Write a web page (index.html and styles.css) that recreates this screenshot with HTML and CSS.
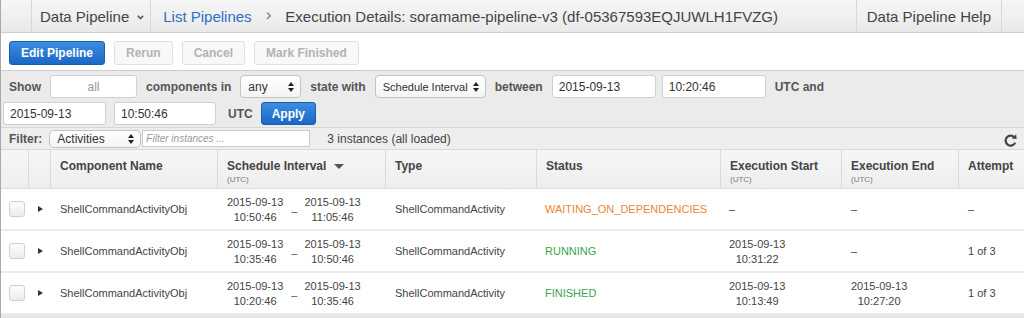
FILE: index.html
```html
<!DOCTYPE html>
<html>
<head>
<meta charset="utf-8">
<link rel="stylesheet" href="styles.css">
</head>
<body>
<div class="page">
  <header class="topbar">
    <div class="nav-cell nav-blank"></div>
    <div class="nav-cell nav-service">Data Pipeline
      <svg class="chev" width="7" height="5" viewBox="0 0 7 5"><polyline points="0.8,0.8 3.5,3.6 6.2,0.8" fill="none" stroke="#555" stroke-width="1.6"/></svg>
    </div>
    <nav class="crumbs">
      <a class="crumb-link">List Pipelines</a>
      <span class="crumb-sep">›</span>
      <span class="crumb-title">Execution Details: soramame-pipeline-v3 (df-05367593EQJUWLH1FVZG)</span>
    </nav>
    <div class="nav-cell nav-help">Data Pipeline Help</div>
    <div class="nav-tail"></div>
  </header>

  <div class="toolbar">
    <button class="btn btn-primary">Edit Pipeline</button>
    <button class="btn btn-disabled">Rerun</button>
    <button class="btn btn-disabled">Cancel</button>
    <button class="btn btn-disabled">Mark Finished</button>
  </div>

  <section class="query">
    <div class="qrow qrow-1">
      <span class="qlabel">Show</span>
      <span class="field field-count">all</span>
      <span class="qlabel">components in</span>
      <span class="select select-state"><span>any</span><svg class="updown" width="6" height="10" viewBox="0 0 6 10"><path d="M3 0 L6 4 L0 4 Z M3 10 L6 6 L0 6 Z" fill="#222"/></svg></span>
      <span class="qlabel">state with</span>
      <span class="select select-kind"><span>Schedule Interval</span><svg class="updown" width="6" height="10" viewBox="0 0 6 10"><path d="M3 0 L6 4 L0 4 Z M3 10 L6 6 L0 6 Z" fill="#222"/></svg></span>
      <span class="qlabel">between</span>
      <span class="dtpair">
        <span class="field field-date">2015-09-13</span>
        <span class="field field-time">10:20:46</span>
      </span>
      <span class="qlabel">UTC and</span>
    </div>
    <div class="qrow qrow-2">
      <span class="dtpair dtpair-2">
        <span class="field field-date2">2015-09-13</span>
        <span class="field field-time2">10:50:46</span>
      </span>
      <span class="qlabel utc">UTC</span>
      <button class="btn btn-primary btn-apply">Apply</button>
    </div>
  </section>

  <div class="filterbar">
    <span class="qlabel">Filter:</span>
    <span class="select select-filter"><span>Activities</span><svg class="updown" width="6" height="10" viewBox="0 0 6 10"><path d="M3 0 L6 4 L0 4 Z M3 10 L6 6 L0 6 Z" fill="#222"/></svg></span>
    <span class="search">Filter instances ...</span>
    <span class="count">3 instances (all loaded)</span>
    <svg class="refresh" width="13" height="13" viewBox="0 0 13 13"><path d="M10.6 3.6 A5 5 0 1 0 11.2 8.6" fill="none" stroke="#444" stroke-width="2.2"/><path d="M7.6 4.6 L12.6 4.9 L12.2 0.2 Z" fill="#444"/></svg>
  </div>

  <div class="grid">
    <div class="th"></div>
    <div class="th"></div>
    <div class="th">Component Name</div>
    <div class="th"><div>Schedule Interval<svg class="sort" width="10" height="5" viewBox="0 0 10 5"><path d="M0 0 L10 0 L5 5 Z" fill="#555"/></svg></div><div class="sub">(UTC)</div></div>
    <div class="th">Type</div>
    <div class="th">Status</div>
    <div class="th"><div>Execution Start</div><div class="sub">(UTC)</div></div>
    <div class="th"><div>Execution End</div><div class="sub">(UTC)</div></div>
    <div class="th th-last">Attempt</div>

    <div class="td"><span class="check"></span></div>
    <div class="td td-exp"><span class="tri"></span></div>
    <div class="td">ShellCommandActivityObj</div>
    <div class="td td-range"><span class="dt">2015-09-13<br>10:50:46</span><span class="dash">–</span><span class="dt">2015-09-13<br>11:05:46</span></div>
    <div class="td">ShellCommandActivity</div>
    <div class="td td-status st-wait">WAITING_ON_DEPENDENCIES</div>
    <div class="td td-start">–</div>
    <div class="td">–</div>
    <div class="td">–</div>

    <div class="td"><span class="check"></span></div>
    <div class="td td-exp"><span class="tri"></span></div>
    <div class="td">ShellCommandActivityObj</div>
    <div class="td td-range"><span class="dt">2015-09-13<br>10:35:46</span><span class="dash">–</span><span class="dt">2015-09-13<br>10:50:46</span></div>
    <div class="td">ShellCommandActivity</div>
    <div class="td td-status st-ok">RUNNING</div>
    <div class="td td-start"><span class="dt">2015-09-13<br>10:31:22</span></div>
    <div class="td">–</div>
    <div class="td">1 of 3</div>

    <div class="td"><span class="check"></span></div>
    <div class="td td-exp"><span class="tri"></span></div>
    <div class="td">ShellCommandActivityObj</div>
    <div class="td td-range"><span class="dt">2015-09-13<br>10:20:46</span><span class="dash">–</span><span class="dt">2015-09-13<br>10:35:46</span></div>
    <div class="td">ShellCommandActivity</div>
    <div class="td td-status st-ok">FINISHED</div>
    <div class="td td-start"><span class="dt">2015-09-13<br>10:13:49</span></div>
    <div class="td"><span class="dt">2015-09-13<br>10:27:20</span></div>
    <div class="td">1 of 3</div>
  </div>
  <div class="footer-strip"></div>
</div>
</body>
</html>
```

FILE: styles.css
```css
* { box-sizing: border-box; }
html, body { margin: 0; padding: 0; background: #fff; }
body {
  font-family: "Liberation Sans", Arial, Helvetica, sans-serif;
  color: #444;
  width: 1024px;
  height: 318px;
  overflow: hidden;
}
.page {
  border-left: 1px solid #a9a9a9;
  height: 318px;
  overflow: hidden;
}

/* ---------- top bar ---------- */
.topbar {
  display: flex;
  height: 33px;
  background: linear-gradient(#f6f6f6, #e9e9e9);
  border-bottom: 1px solid #cfcfcf;
  font-size: 15px;
  color: #444;
}
.nav-cell {
  display: flex;
  align-items: center;
  height: 100%;
  border-right: 1px solid #d8d8d8;
}
.nav-blank { width: 31px; }
.nav-service { padding: 0 6px 0 8px; }
.chev { margin-left: 8px; margin-top: 2px; }
.crumbs {
  flex: 1;
  display: flex;
  align-items: center;
  gap: 14px;
  padding-left: 12px;
}
.crumb-link { color: #2f6fc4; }
.crumb-sep { color: #777; font-size: 17px; margin-top: -2px; }
.nav-help { border-left: 1px solid #d8d8d8; padding: 0 10px; }
.nav-tail { width: 22px; }

/* ---------- toolbar ---------- */
.toolbar {
  display: flex;
  gap: 9px;
  padding: 8px 8px 5px;
}
.btn {
  font-family: "Liberation Sans", Arial, sans-serif;
  font-weight: bold;
  font-size: 12px;
  height: 24px;
  padding: 0 11px;
  border-radius: 3px;
  border: 1px solid;
  cursor: default;
}
.btn-primary {
  background: linear-gradient(#3c8de0, #1b67c6);
  border-color: #1a5eb3;
  color: #fff;
}
.btn-disabled {
  background: #f8f8f8;
  border-color: #e0e0e0;
  color: #b3b3b3;
}

/* ---------- query panel ---------- */
.query {
  background: #ebebeb;
  border-top: 1px solid #cdcdcd;
  padding: 4px 0 2px;
}
.qrow {
  display: flex;
  align-items: center;
  gap: 9px;
  height: 23px;
  white-space: nowrap;
}
.qrow > * { flex-shrink: 0; }
.qrow-1 { padding-left: 8px; }
.qrow-2 { padding-left: 2px; margin-top: 4px; }
.qlabel {
  font-weight: bold;
  font-size: 12px;
  color: #555;
}
.field {
  display: flex;
  align-items: center;
  height: 23px;
  background: #fff;
  border: 1px solid #d0d0d0;
  border-radius: 3px;
  font-size: 12px;
  color: #333;
  padding-left: 6px;
}
.field-count { width: 87px; justify-content: center; padding-left: 0; color: #999; }
.dtpair { display: flex; gap: 6px; }
.dtpair-2 { gap: 8px; }
.field-date { width: 104px; }
.field-time { width: 104px; }
.field-date2 { width: 103px; }
.field-time2 { width: 102px; }
.utc { margin-left: 3px; }
.btn-apply { height: 23px; padding: 0 10px; margin-left: -1px; font-size: 12px; }

.select {
  display: flex;
  align-items: center;
  justify-content: space-between;
  height: 23px;
  padding: 0 6px 0 7px;
  background: linear-gradient(#ffffff, #f4f4f4);
  border: 1px solid #c4c4c4;
  border-radius: 4px;
  font-size: 12px;
  color: #333;
  white-space: nowrap;
}
.select-state { width: 61px; }
.select-kind { width: 111px; padding-left: 7px; font-size: 11px; }

/* ---------- filter bar ---------- */
.filterbar {
  display: flex;
  align-items: center;
  height: 23px;
  padding: 0 7px 0 8px;
  background: #eeeeee;
  border-top: 1px solid #d6d6d6;
  border-bottom: 1px solid #d9d9d9;
}
.select-filter {
  width: 92px;
  height: 18px;
  margin-left: 7px;
  border-radius: 5px;
  padding-left: 7px;
}
.search {
  display: flex;
  align-items: center;
  width: 168px;
  height: 17px;
  margin-left: 1px;
  background: #fff;
  border: 1px solid #cbcbcb;
  font-size: 10px;
  font-style: italic;
  color: #999;
  padding-left: 3px;
}
.count { font-size: 12px; color: #444; margin-left: 17px; }
.refresh { margin-left: auto; margin-top: 3px; }

/* ---------- grid ---------- */
.grid {
  display: grid;
  grid-template-columns: 28px 22px 167px 168px 151px 184px 121px 117px 1fr;
  grid-auto-rows: auto;
}
.th {
  height: 39px;
  padding: 9px 9px 0;
  background: linear-gradient(#f6f6f6, #eeeeee);
  border-right: 1px solid #dadada;
  border-bottom: 1px solid #dcdcdc;
  font-weight: bold;
  font-size: 12px;
  line-height: 14px;
  color: #444;
  white-space: nowrap;
}
.th-last { border-right: none; }
.th .sub {
  font-weight: normal;
  font-size: 8px;
  line-height: 10px;
  color: #777;
  margin-top: 2px;
}
.sort { margin-left: 8px; vertical-align: middle; }

.td {
  display: flex;
  align-items: center;
  height: 42px;
  padding: 0 0 0 9px;
  border-bottom: 2px solid #ebebeb;
  font-size: 11px;
  color: #444;
  white-space: nowrap;
  background: #fff;
}
.td-status { padding-left: 8px; }
.td-start { padding-left: 8px; }
.check {
  width: 16px;
  height: 16px;
  margin-left: -1px;
  border: 1px solid #d0d0d0;
  border-radius: 3px;
  background: linear-gradient(#fdfdfd, #ececec);
}
.tri {
  width: 0;
  height: 0;
  border-top: 3.5px solid transparent;
  border-bottom: 3.5px solid transparent;
  border-left: 5px solid #333;
}
.dt {
  display: inline-block;
  text-align: center;
  line-height: 15px;
  margin-top: 2px;
}
.dash { margin: 4px 7px 0 8px; color: #555; }
.st-wait { color: #ec8630; }
.st-ok { color: #3aa54a; }

.footer-strip {
  height: 10px;
  background: #e6e6e6;
}
```
